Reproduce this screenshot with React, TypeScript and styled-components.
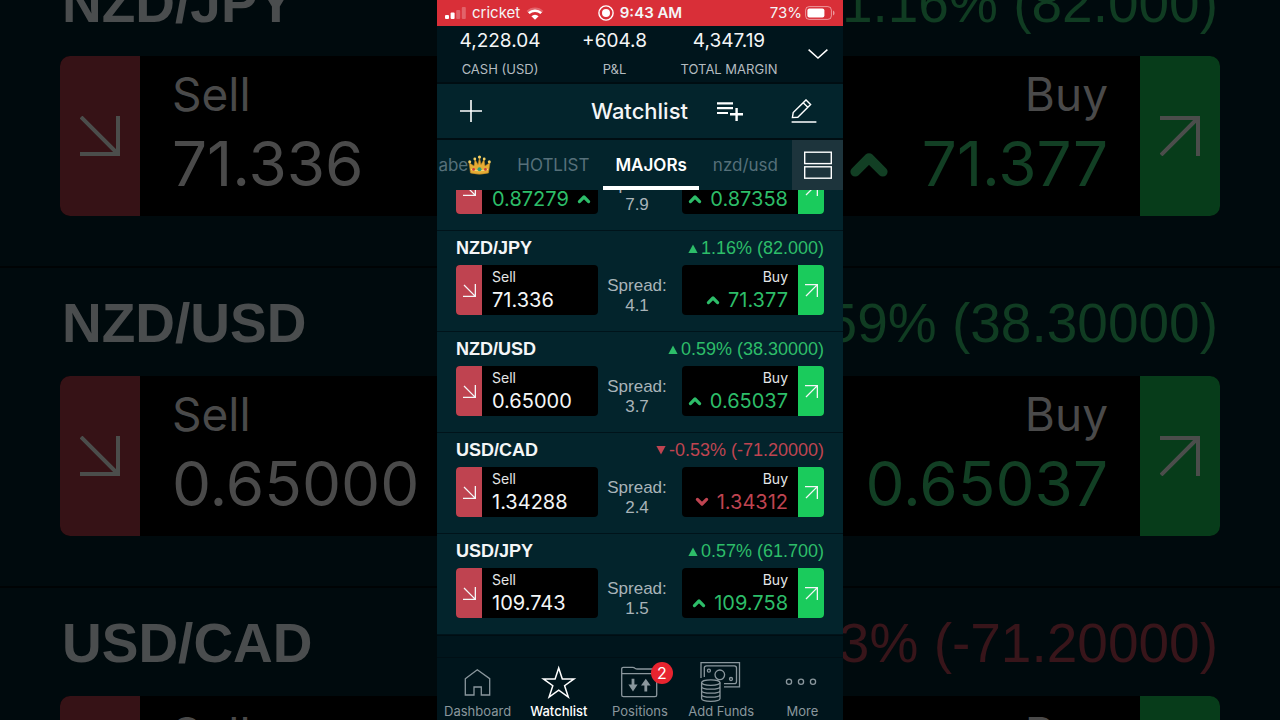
import React from "react";
import styled, { createGlobalStyle } from "styled-components";

const color = {
  ground: "#03242c",
  bar: "#00151c",
  line: "#000d12",
  white: "#f4f6f7",
  soft: "#a9b4b9",
  muted: "#8a979d",
  faint: "#56707a",
  up: "#2dbd69",
  down: "#bf4451",
  sell: "#bf4350",
  buy: "#1acb5c",
};
const sans = `Inter, "Liberation Sans", sans-serif`;
const grotesk = `"Liberation Sans", Arial, sans-serif`;

type Dir = "up" | "down";
type Quote = {
  pair?: string;
  change?: string;
  trend: Dir;
  sell: string;
  sellDir?: Dir;
  spread: string;
  buy: string;
  buyDir: Dir;
};

const quotes: Quote[] = [
  { trend: "up", sell: "0.87279", sellDir: "up", spread: "7.9", buy: "0.87358", buyDir: "up" },
  { pair: "NZD/JPY", change: "1.16% (82.000)", trend: "up", sell: "71.336", spread: "4.1", buy: "71.377", buyDir: "up" },
  { pair: "NZD/USD", change: "0.59% (38.30000)", trend: "up", sell: "0.65000", spread: "3.7", buy: "0.65037", buyDir: "up" },
  { pair: "USD/CAD", change: "-0.53% (-71.20000)", trend: "down", sell: "1.34288", spread: "2.4", buy: "1.34312", buyDir: "down" },
  { pair: "USD/JPY", change: "0.57% (61.700)", trend: "up", sell: "109.743", spread: "1.5", buy: "109.758", buyDir: "up" },
];

const Global = createGlobalStyle`
  * { box-sizing: border-box; }
  body { margin: 0; background: #000a0d; font-family: ${sans}; color: ${color.white}; }
  button { font: inherit; color: inherit; background: none; border: 0; padding: 0; cursor: pointer; }
  svg { display: block; flex: none; }
`;

const Page = styled.div`
  display: grid;
  grid-template-columns: minmax(0, 1fr) minmax(0, 406px) minmax(0, 1fr);
  height: 100vh;
  overflow: hidden;
`;

/* Dimmed, enlarged quotes at both sides of the phone */
const Backdrop = styled.div`
  overflow: hidden;
  min-width: 0;
`;
const BackdropList = styled.div`
  margin-top: -52px;
`;
const BackdropRow = styled.div<{ $side: "left" | "right" }>`
  display: flex;
  flex-direction: column;
  height: 320px;
  padding-top: 24px;
  padding-${(p) => p.$side}: 60px;
  align-items: ${(p) => (p.$side === "left" ? "stretch" : "flex-end")};
  border-bottom: 2px solid #000304;
`;
const BackdropPair = styled.div`
  height: 84px;
  padding-left: 2px;
  font: 700 55px/62px ${grotesk};
  color: #4a4d4e;
  white-space: nowrap;
`;
const BackdropChange = styled.div<{ $dir: Dir }>`
  height: 84px;
  padding-right: 2px;
  font: 400 55px/62px ${grotesk};
  color: ${(p) => (p.$dir === "up" ? "#103c22" : "#38151a")};
  white-space: nowrap;
`;
const BackdropBox = styled.div<{ $side: "left" | "right" }>`
  display: flex;
  flex-direction: ${(p) => (p.$side === "left" ? "row" : "row-reverse")};
  width: 448px;
  height: 160px;
  background: #000;
  border-radius: 10px;
  overflow: hidden;
`;
const BackdropEnd = styled.div<{ $kind: "sell" | "buy" }>`
  flex: none;
  display: flex;
  align-items: center;
  justify-content: center;
  width: 80px;
  background: ${(p) => (p.$kind === "sell" ? "#361216" : "#073c1a")};
  color: #4b4d4b;
`;
const BackdropText = styled.div<{ $right?: boolean }>`
  display: flex;
  flex-direction: column;
  align-items: ${(p) => (p.$right ? "flex-end" : "flex-start")};
  padding: 8px 32px 0;
  white-space: nowrap;
`;
const BackdropLabel = styled.div`
  font: 400 46px/60px ${sans};
  color: #4a4a4a;
`;
const BackdropPrice = styled.div<{ $dir?: Dir }>`
  display: flex;
  align-items: center;
  gap: 32px;
  font: 400 62px/80px ${sans};
  color: ${(p) => (!p.$dir ? "#4a4a4a" : p.$dir === "up" ? "#123f24" : "#38151a")};
`;

/* Phone */
const Phone = styled.main`
  display: flex;
  flex-direction: column;
  min-height: 0;
  height: 100vh;
  background: ${color.ground};
`;
const StatusBar = styled.div`
  flex: none;
  display: grid;
  grid-template-columns: 1fr auto 1fr;
  align-items: center;
  height: 26px;
  padding: 0 8px;
  background: #d92f38;
  font-size: 15px;
  line-height: 20px;
`;
const StatusGroup = styled.div<{ $end?: boolean; $bold?: boolean }>`
  display: flex;
  align-items: center;
  justify-content: ${(p) => (p.$end ? "flex-end" : "flex-start")};
  gap: ${(p) => (p.$end ? 3 : 6)}px;
  font-weight: ${(p) => (p.$bold ? 600 : 400)};
`;
const Summary = styled.section`
  flex: none;
  display: grid;
  grid-template-columns: 126px 103px 126px 51px;
  height: 58px;
  background: ${color.bar};
  border-bottom: 2px solid ${color.line};
`;
const Figure = styled.div`
  display: flex;
  flex-direction: column;
  align-items: center;
  white-space: nowrap;
`;
const FigureValue = styled.div`
  font-size: 19px;
  line-height: 30px;
`;
const FigureLabel = styled.div`
  font-size: 13px;
  line-height: 26px;
  color: #b4bcc0;
`;
const ExpandButton = styled.button`
  display: flex;
  align-items: center;
  justify-content: center;
`;
const Header = styled.header`
  flex: none;
  display: grid;
  grid-template-columns: 68px 1fr 84px 64px;
  align-items: center;
  height: 56px;
  padding-right: 7px;
  border-bottom: 2px solid ${color.line};
`;
const HeaderButton = styled.button`
  display: flex;
  align-items: center;
  justify-content: center;
`;
const Title = styled.h1`
  margin: 0;
  text-align: right;
  font-size: 22px;
  line-height: 28px;
  font-weight: 500;
`;
const Tabs = styled.nav`
  flex: none;
  display: flex;
  height: 50px;
  overflow: hidden;
`;
const TabStrip = styled.div`
  flex: 1;
  min-width: 0;
  display: flex;
  justify-content: flex-end;
  gap: 2px;
  overflow: hidden;
  padding-right: 2px;
`;
const Tab = styled.button<{ $active?: boolean }>`
  flex: none;
  display: flex;
  align-items: center;
  padding: 4px 12px 0;
  border-bottom: 4px solid ${(p) => (p.$active ? "#fff" : "transparent")};
  font-size: 17px;
  line-height: 24px;
  font-weight: ${(p) => (p.$active ? 600 : 400)};
  color: ${(p) => (p.$active ? "#fff" : color.faint)};
`;
const LayoutButton = styled.button`
  flex: none;
  display: flex;
  align-items: center;
  justify-content: center;
  width: 51px;
  background: #1d343c;
`;
const List = styled.div`
  flex: 1;
  min-height: 0;
  display: flex;
  flex-direction: column;
  justify-content: flex-end;
  overflow: hidden;
`;
const Row = styled.article`
  flex: none;
  height: 101px;
  padding: 6px 19px 0;
  border-bottom: 1px solid #00131a;
`;
const RowHead = styled.div`
  display: flex;
  justify-content: space-between;
  height: 28px;
`;
const Pair = styled.h2`
  margin: 0;
  font: 700 18px/22px ${grotesk};
`;
const Change = styled.div<{ $dir: Dir }>`
  display: flex;
  align-items: center;
  gap: 3px;
  height: 22px;
  font: 400 18px/22px ${grotesk};
  color: ${(p) => color[p.$dir]};
`;
const RowBody = styled.div`
  display: grid;
  grid-template-columns: 142px 1fr 142px;
`;
const PriceBox = styled.button<{ $kind: "sell" | "buy" }>`
  display: flex;
  flex-direction: ${(p) => (p.$kind === "sell" ? "row" : "row-reverse")};
  height: 50px;
  background: #000;
  border-radius: 4px;
  overflow: hidden;
`;
const PriceEnd = styled.span<{ $kind: "sell" | "buy" }>`
  flex: none;
  display: flex;
  align-items: center;
  justify-content: center;
  width: 26px;
  height: 50px;
  background: ${(p) => color[p.$kind]};
`;
const PriceText = styled.span<{ $kind: "sell" | "buy" }>`
  flex: 1;
  display: flex;
  flex-direction: column;
  align-items: ${(p) => (p.$kind === "sell" ? "flex-start" : "flex-end")};
  padding: 2px 10px 0;
`;
const PriceLabel = styled.span`
  font-size: 14px;
  line-height: 20px;
  color: #e4e6e7;
`;
const Price = styled.span<{ $dir?: Dir }>`
  display: flex;
  align-items: center;
  gap: 8px;
  font-size: 20px;
  line-height: 26px;
  color: ${(p) => (p.$dir ? color[p.$dir] : color.white)};
`;
const Spread = styled.div`
  padding: 11px 6px 0 0;
  text-align: center;
  font: 400 17px/20px ${grotesk};
  color: ${color.soft};
`;
const Footer = styled.footer`
  flex: none;
  background: ${color.bar};
  border-top: 1px solid ${color.line};
  padding-top: 21px;
`;
const NavBar = styled.nav`
  display: grid;
  grid-template-columns: repeat(5, 1fr);
  padding: 2px 0 1px;
  border-top: 1px solid #000f15;
`;
const NavItem = styled.button<{ $active?: boolean }>`
  display: flex;
  flex-direction: column;
  align-items: center;
  font-size: 13px;
  line-height: 15px;
  white-space: nowrap;
  font-weight: ${(p) => (p.$active ? 500 : 400)};
  color: ${(p) => (p.$active ? "#fff" : color.muted)};
`;
const NavIcon = styled.span`
  position: relative;
`;
const Badge = styled.span`
  position: absolute;
  top: 2px;
  left: 34px;
  width: 22px;
  height: 22px;
  border-radius: 11px;
  background: #e8242f;
  color: #fff;
  font-size: 16px;
  font-weight: 400;
  line-height: 22px;
  text-align: center;
`;

const Arrow = ({ dir, size, width }: { dir: "se" | "ne"; size: number; width: number }) => (
  <svg width={size} height={size} viewBox={`0 0 ${size} ${size}`} fill="none" stroke="currentColor" strokeWidth={width}>
    {dir === "se" ? (
      <path d={`M1 1L${size - width / 2} ${size - width / 2}M${size - width / 2} 0V${size - width / 2}H0`} />
    ) : (
      <path d={`M1 ${size - 1}L${size - width / 2} ${width / 2}M0 ${width / 2}H${size - width / 2}V${size}`} />
    )}
  </svg>
);

const Caret = ({ dir, scale = 1 }: { dir: Dir; scale?: number }) => (
  <svg width={14 * scale} height={10 * scale} viewBox="0 0 14 10" fill="none" stroke="currentColor" strokeWidth="3.2" strokeLinecap="round" strokeLinejoin="round">
    <path d={dir === "up" ? "M2.4 7.6L7 3L11.6 7.6" : "M2.4 2.4L7 7L11.6 2.4"} />
  </svg>
);

const Triangle = ({ dir }: { dir: Dir }) => (
  <svg width="10" height="10" viewBox="0 0 10 10" fill="currentColor">
    <path d={dir === "up" ? "M5 1.5L9.6 10H.4Z" : "M.4 1H9.6L5 9.5Z"} />
  </svg>
);

const SignalIcon = () => (
  <svg width="21" height="12" viewBox="0 0 21 12" fill="#fff">
    <rect x="0" y="8" width="4" height="4" rx="1" />
    <rect x="5.6" y="5.6" width="4" height="6.4" rx="1" />
    <rect x="11.2" y="3" width="4" height="9" rx="1" opacity=".25" />
    <rect x="16.8" y="0" width="4" height="12" rx="1" opacity=".25" />
  </svg>
);

const WifiIcon = () => (
  <svg width="18" height="13" viewBox="0 0 18 13" fill="none" stroke="#fff" strokeWidth="2.4">
    <path d="M1.4 4.8A11 11 0 0 1 16.6 4.8" opacity=".25" />
    <path d="M2.8 6.2A9 9 0 0 1 15.2 6.2" />
    <path d="M5.4 9.2A5 5 0 0 1 12.6 9.2L9 12.8Z" fill="#fff" stroke="none" />
  </svg>
);

const CrownIcon = () => (
  <svg width="23" height="20" viewBox="0 0 23 20">
    <path d="M2.5 18L1 7.5L6 11L7 4.5L10 9.5L11.5 2.5L13 9.5L16 4.5L17 11L22 7.5L20.5 18Q11.5 20.5 2.5 18Z" fill="#e5ad35" stroke="#b97f1d" strokeWidth=".6" />
    <path d="M3 14.4Q11.5 17 20 14.4" stroke="#f7d873" strokeWidth="1.2" fill="none" />
    <g fill="#f3cf62">
      <circle cx="1.7" cy="6.8" r="1.5" />
      <circle cx="6.8" cy="4" r="1.4" />
      <circle cx="11.5" cy="2" r="1.6" />
      <circle cx="16.2" cy="4" r="1.4" />
      <circle cx="21.3" cy="6.8" r="1.5" />
    </g>
    <circle cx="11.5" cy="14.2" r="2" fill="#2f9f77" />
    <circle cx="5.6" cy="14.4" r="1.4" fill="#cf3b3b" />
    <circle cx="17.4" cy="14.4" r="1.4" fill="#cf3b3b" />
  </svg>
);

const BackdropRows = ({ side }: { side: "left" | "right" }) => (
  <Backdrop aria-hidden="true">
    <BackdropList>
      {quotes.slice(1, 4).map((q) => (
        <BackdropRow key={q.pair} $side={side}>
          {side === "left" ? (
            <>
              <BackdropPair>{q.pair}</BackdropPair>
              <BackdropBox $side={side}>
                <BackdropEnd $kind="sell"><Arrow dir="se" size={40} width={4} /></BackdropEnd>
                <BackdropText>
                  <BackdropLabel>Sell</BackdropLabel>
                  <BackdropPrice>{q.sell}</BackdropPrice>
                </BackdropText>
              </BackdropBox>
            </>
          ) : (
            <>
              <BackdropChange $dir={q.trend}>{q.change}</BackdropChange>
              <BackdropBox $side={side}>
                <BackdropEnd $kind="buy"><Arrow dir="ne" size={40} width={4} /></BackdropEnd>
                <BackdropText $right>
                  <BackdropLabel>Buy</BackdropLabel>
                  <BackdropPrice $dir={q.buyDir}>
                    <Caret dir={q.buyDir} scale={3} />
                    {q.buy}
                  </BackdropPrice>
                </BackdropText>
              </BackdropBox>
            </>
          )}
        </BackdropRow>
      ))}
    </BackdropList>
  </Backdrop>
);

const QuoteRow = ({ q }: { q: Quote }) => (
  <Row>
    <RowHead>
      {q.pair && <Pair>{q.pair}</Pair>}
      {q.change && (
        <Change $dir={q.trend}>
          <Triangle dir={q.trend} />
          {q.change}
        </Change>
      )}
    </RowHead>
    <RowBody>
      <PriceBox $kind="sell" type="button">
        <PriceEnd $kind="sell"><Arrow dir="se" size={13} width={1.3} /></PriceEnd>
        <PriceText $kind="sell">
          <PriceLabel>Sell</PriceLabel>
          <Price $dir={q.sellDir}>
            {q.sell}
            {q.sellDir && <Caret dir={q.sellDir} />}
          </Price>
        </PriceText>
      </PriceBox>
      <Spread>
        Spread:
        <br />
        {q.spread}
      </Spread>
      <PriceBox $kind="buy" type="button">
        <PriceEnd $kind="buy"><Arrow dir="ne" size={13} width={1.3} /></PriceEnd>
        <PriceText $kind="buy">
          <PriceLabel>Buy</PriceLabel>
          <Price $dir={q.buyDir}>
            <Caret dir={q.buyDir} />
            {q.buy}
          </Price>
        </PriceText>
      </PriceBox>
    </RowBody>
  </Row>
);

const navItems = [
  {
    label: "Dashboard",
    icon: <path d="M11.3 18.7L23.3 9.7L35.7 18.7V35H27.3V27H20V35H11.3Z" />,
  },
  {
    label: "Watchlist",
    active: true,
    icon: <path d="M23.7 8L27.3 18.9H39L29.6 25.7L33.3 37L23.7 30.2L14.1 37L17.8 25.7L8.4 18.9H20.1Z" strokeWidth="1.5" />,
  },
  {
    label: "Positions",
    badge: "2",
    icon: (
      <>
        <path d="M5.7 35V9Q5.7 7.3 7.4 7.3H16.6Q18 7.3 19 8.2Q20 9 21.4 9H39Q40.7 9 40.7 10.7V35Q40.7 36.7 39 36.7H7.4Q5.7 36.7 5.7 35ZM5.7 13.7H40.7" />
        <path d="M15.6 18.7H18.4V24.6H21.6L17 31.4L12.4 24.6H15.6Z" fill="currentColor" stroke="none" />
        <path d="M28.4 31.4H31.2V25.6H34.6L29.8 18.7L25 25.6H28.4Z" fill="currentColor" stroke="none" />
      </>
    ),
  },
  {
    label: "Add Funds",
    icon: (
      <>
        <path d="M4 18V2.7H42.5V26.8H27M7.3 17V8Q7.3 5.8 9.5 5.8H37.3Q39.5 5.8 39.5 8V21.5Q39.5 23.7 37.3 23.7H27" />
        <circle cx="22.8" cy="14.8" r="4.8" />
        <circle cx="11.9" cy="10.7" r="1.5" />
        <circle cx="34" cy="19" r="1.5" />
        <ellipse cx="13.8" cy="22.6" rx="9.2" ry="2.7" />
        <path d="M4.6 22.6V38.6C4.6 42.3 23 42.3 23 38.6V22.6M4.6 26.4C4.6 30 23 30 23 26.4M4.6 30.4C4.6 34 23 34 23 30.4M4.6 34.5C4.6 38.1 23 38.1 23 34.5" />
      </>
    ),
  },
  {
    label: "More",
    icon: (
      <>
        <circle cx="11" cy="21.7" r="2.6" />
        <circle cx="23" cy="21.7" r="2.6" />
        <circle cx="35" cy="21.7" r="2.6" />
      </>
    ),
  },
];

export default function App() {
  return (
    <>
      <Global />
      <Page>
        <BackdropRows side="left" />
        <Phone>
          <StatusBar>
            <StatusGroup>
              <SignalIcon />
              cricket
              <WifiIcon />
            </StatusGroup>
            <StatusGroup $bold>
              <svg width="16" height="16" viewBox="0 0 16 16" fill="none" stroke="#fff" strokeWidth="1.4">
                <circle cx="8" cy="8" r="7.1" />
                <circle cx="8" cy="8" r="4" fill="#fff" stroke="none" />
              </svg>
              9:43 AM
            </StatusGroup>
            <StatusGroup $end>
              73%
              <svg width="30" height="14" viewBox="0 0 30 14" fill="none">
                <rect x=".6" y=".6" width="25.8" height="12.8" rx="3.6" stroke="#fff" strokeOpacity=".5" />
                <rect x="2.4" y="2.4" width="17" height="9.2" rx="2" fill="#fff" />
                <path d="M28 4.6Q29.6 5.4 29.6 7T28 9.4Z" fill="#fff" fillOpacity=".5" />
              </svg>
            </StatusGroup>
          </StatusBar>
          <Summary>
            <Figure>
              <FigureValue>4,228.04</FigureValue>
              <FigureLabel>CASH (USD)</FigureLabel>
            </Figure>
            <Figure>
              <FigureValue>+604.8</FigureValue>
              <FigureLabel>P&amp;L</FigureLabel>
            </Figure>
            <Figure>
              <FigureValue>4,347.19</FigureValue>
              <FigureLabel>TOTAL MARGIN</FigureLabel>
            </Figure>
            <ExpandButton type="button" aria-label="Expand">
              <svg width="20" height="10" viewBox="0 0 20 10" fill="none" stroke="#fff" strokeWidth="1.5">
                <path d="M.6 .6L10 9L19.4 .6" />
              </svg>
            </ExpandButton>
          </Summary>
          <Header>
            <HeaderButton type="button" aria-label="Add">
              <svg width="22" height="22" viewBox="0 0 22 22" stroke="#fff" strokeWidth="1.6">
                <path d="M11 0V22M0 11H22" />
              </svg>
            </HeaderButton>
            <Title>Watchlist</Title>
            <HeaderButton type="button" aria-label="Add to list">
              <svg width="26" height="20" viewBox="0 0 26 20" stroke="#fff" strokeWidth="2.2">
                <path d="M0 2.4H16M0 7.2H16M0 12H11" />
                <path d="M19.6 7V20M13 13.2H26" strokeWidth="2.4" />
              </svg>
            </HeaderButton>
            <HeaderButton type="button" aria-label="Edit">
              <svg width="26" height="24" viewBox="0 0 26 24" fill="none" stroke="#fff" strokeWidth="1.4">
                <path d="M.6 23H25.4M1.4 18.6L2.2 13.6L15 .9L19.6 5.4L6.8 18.2ZM12.2 3.8L16.8 8.2" />
              </svg>
            </HeaderButton>
          </Header>
          <Tabs>
            <TabStrip>
              <Tab type="button">abe<CrownIcon /></Tab>
              <Tab type="button">HOTLIST</Tab>
              <Tab type="button" $active>MAJORs</Tab>
              <Tab type="button">nzd/usd</Tab>
            </TabStrip>
            <LayoutButton type="button" aria-label="Layout">
              <svg width="28" height="28" viewBox="0 0 28 28" fill="none" stroke="#fff" strokeWidth="1.4">
                <rect x=".7" y="1.2" width="26.6" height="11.4" />
                <rect x=".7" y="15.8" width="26.6" height="11.4" />
              </svg>
            </LayoutButton>
          </Tabs>
          <List>
            {quotes.map((q) => (
              <QuoteRow key={q.sell} q={q} />
            ))}
          </List>
          <Footer>
            <NavBar>
              {navItems.map((item) => (
                <NavItem key={item.label} type="button" $active={item.active}>
                  <NavIcon>
                    <svg width="46" height="44" viewBox="1 0 46 44" fill="none" stroke="currentColor" strokeWidth="1.3">
                      {item.icon}
                    </svg>
                    {item.badge && <Badge>{item.badge}</Badge>}
                  </NavIcon>
                  {item.label}
                </NavItem>
              ))}
            </NavBar>
          </Footer>
        </Phone>
        <BackdropRows side="right" />
      </Page>
    </>
  );
}
